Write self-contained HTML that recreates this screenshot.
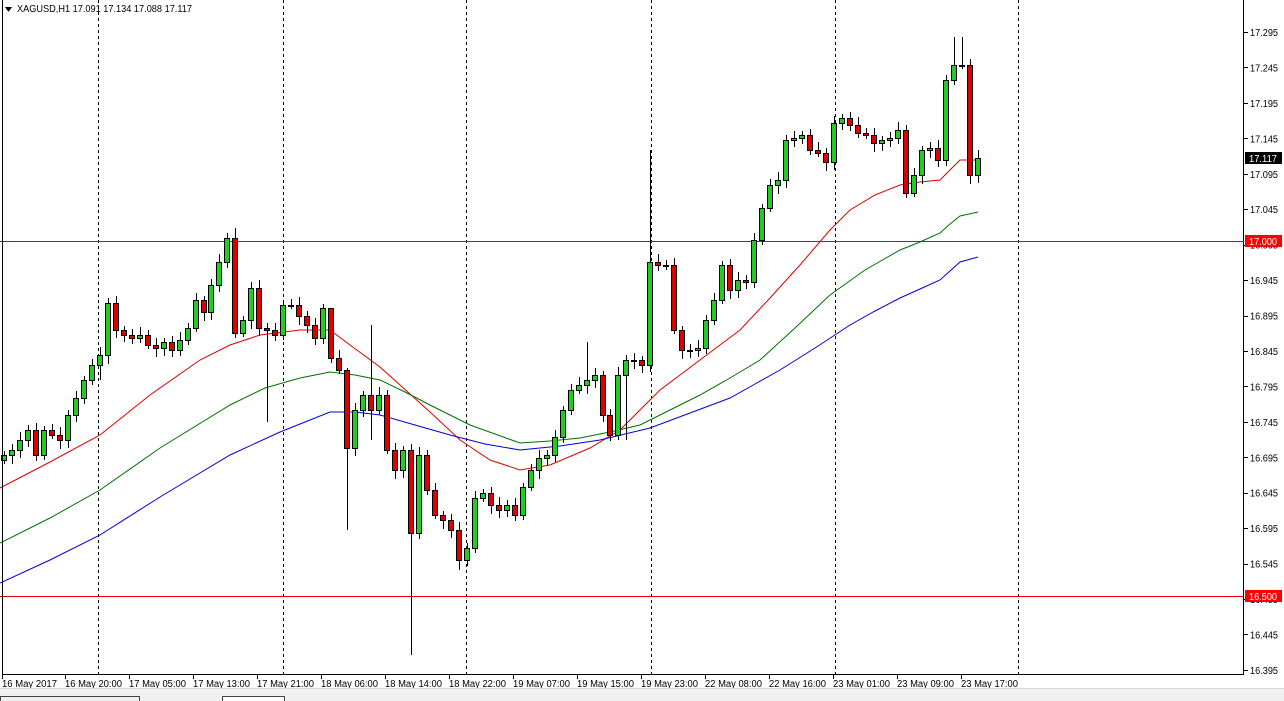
<!DOCTYPE html>
<html><head><meta charset="utf-8"><style>
html,body{margin:0;padding:0;background:#fff;width:1284px;height:701px;overflow:hidden;font-family:"Liberation Sans","DejaVu Sans",sans-serif}
svg text{font-family:"Liberation Sans","DejaVu Sans",sans-serif;font-size:10px}
</style></head><body>
<svg id="s" width="1284" height="701" xmlns="http://www.w3.org/2000/svg" shape-rendering="crispEdges">
<rect width="1284" height="701" fill="#fff"/>
<g id="grid"></g>
<line x1="0" y1="241.5" x2="1244" y2="241.5" stroke="#e00000"/>
<line x1="0" y1="596.5" x2="1244" y2="596.5" stroke="#e00000"/>
<g id="ma" shape-rendering="auto"></g>
<g id="c"></g>
<rect x="2.5" y="-1" width="1241" height="675.5" fill="none" stroke="#000"/>
<g id="ax"></g>
<polygon points="5,7 12,7 8.5,12" fill="#000"/>
<text x="17" y="12" fill="#000" textLength="175" lengthAdjust="spacingAndGlyphs">XAGUSD,H1  17.091 17.134 17.088 17.117</text>
<rect x="0" y="688" width="1284" height="13" fill="#f0f0f0"/>
<line x1="0" y1="688.5" x2="1284" y2="688.5" stroke="#d8d8d8"/>
<rect x="0.5" y="696.5" width="139" height="6" fill="#f0f0f0" stroke="#444"/>
<rect x="222.5" y="696.5" width="62" height="6" fill="#fff" stroke="#444"/>
</svg>
<script>
const NS="http://www.w3.org/2000/svg";
function el(p,t,a,txt){const e=document.createElementNS(NS,t);for(const k in a)e.setAttribute(k,a[k]);if(txt)e.textContent=txt;p.appendChild(e);return e;}
const g=document.getElementById('grid');
[98,283,466,651,835,1018].forEach(x=>el(g,'line',{x1:x+.5,y1:0,x2:x+.5,y2:674,stroke:'#000','stroke-dasharray':'3,3'}));
const ax=document.getElementById('ax');
for(let i=0;i<=18;i++){const y=32+i*35.44;const p=(17.295-i*0.05).toFixed(3);
el(ax,'line',{x1:1244,y1:Math.round(y)+.5,x2:1248,y2:Math.round(y)+.5,stroke:'#000'});
el(ax,'text',{x:1250,y:y+4,fill:'#000',textLength:28,lengthAdjust:'spacingAndGlyphs'},p);}
el(ax,'rect',{x:1245,y:152,width:37,height:12,fill:'#000'});el(ax,'text',{x:1249,y:162,fill:'#fff',textLength:28,lengthAdjust:'spacingAndGlyphs'},'17.117');
el(ax,'rect',{x:1245,y:235,width:37,height:12,fill:'#f00'});el(ax,'text',{x:1249,y:245,fill:'#fff',textLength:28,lengthAdjust:'spacingAndGlyphs'},'17.000');
el(ax,'rect',{x:1245,y:590,width:37,height:12,fill:'#f00'});el(ax,'text',{x:1249,y:600,fill:'#fff',textLength:28,lengthAdjust:'spacingAndGlyphs'},'16.500');
const tl=[[2,'16 May 2017'],[65,'16 May 20:00'],[129,'17 May 05:00'],[193,'17 May 13:00'],[257,'17 May 21:00'],[321,'18 May 06:00'],[385,'18 May 14:00'],[449,'18 May 22:00'],[513,'19 May 07:00'],[577,'19 May 15:00'],[641,'19 May 23:00'],[705,'22 May 08:00'],[769,'22 May 16:00'],[833,'23 May 01:00'],[897,'23 May 09:00'],[961,'23 May 17:00']];
tl.forEach(([x,t],i)=>{el(ax,'line',{x1:x+.5,y1:674,x2:x+.5,y2:679,stroke:'#000'});el(ax,'text',{x:x,y:687,fill:'#000',textLength:i==0?55:57,lengthAdjust:'spacingAndGlyphs'},t);});
const ma=document.getElementById('ma');
function line(pts,col){el(ma,'polyline',{points:pts.map(p=>p.join(',')).join(' '),fill:'none',stroke:col,'stroke-width':1});}
line([[0,488],[50,462],[100,435],[150,395],[200,360],[230,345],[260,335],[300,330],[330,330],[350,345],[380,367],[400,385],[430,412],[460,440],[490,460],[520,470],[550,465],[590,448],[620,430],[640,410],[660,390],[700,360],[740,330],[770,298],[800,265],[830,230],[850,210],[875,195],[900,185],[920,182],[940,180],[950,170],[960,160],[978,160]],'#e00000');
line([[0,543],[50,518],[100,490],[160,448],[230,405],[265,388],[300,378],[330,372],[355,375],[380,380],[405,392],[430,405],[470,425],[520,443],[550,441],[580,438],[610,432],[640,425],[670,410],[700,395],[730,378],[760,360],[795,328],[830,295],[865,270],[900,250],[920,242],[940,233],[950,224],[960,216],[978,212]],'#007000');
line([[0,583],[50,560],[100,535],[160,497],[230,455],[280,432],[330,412],[355,412],[380,415],[415,425],[450,435],[485,444],[520,450],[560,446],[600,440],[625,434],[650,428],[690,413],[730,398],[755,384],[780,370],[815,348],[850,325],[875,311],[900,298],[920,289],[940,280],[950,271],[960,262],[978,257]],'#0000e0');
const cl=[455,450,440,430,455,430,435,440,415,398,380,365,355,303,330,335,338,335,345,348,342,350,340,328,300,312,285,262,238,333,320,288,328,330,335,305,305,316,325,338,308,358,370,448,410,395,410,395,450,470,450,533,455,490,515,520,530,560,548,498,493,505,510,505,515,487,470,458,455,437,410,390,385,380,375,415,435,375,360,360,365,262,265,265,330,350,350,348,320,300,265,290,280,282,240,208,185,180,140,138,135,150,153,162,123,118,125,133,135,143,140,138,130,193,175,150,148,160,80,65,65,175,158];
const hi={29:228,41:325,43:368,46:325,73:342,81:150,119:37,120:37};const lo={43:530,46:440,51:655,33:422,78:440,57:570,12:380};
const c=document.getElementById('c');let o=460;
cl.forEach((v,i)=>{const x=4+i*7.98;const xc=Math.round(x)+.5;const top=Math.min(o,v),bot=Math.max(o,v);
let h=hi[i]!==undefined?hi[i]:top-4-(i*7%5);let l=lo[i]!==undefined?lo[i]:bot+4+(i*5%6);
el(c,'line',{x1:xc,y1:h,x2:xc,y2:l,stroke:'#000'});
el(c,'rect',{x:Math.round(x)-2.5,y:top+.5,width:5,height:Math.max(1,bot-top),fill:v<o?'#22cc22':'#dd0000',stroke:'#000'});
o=v;});
</script>
</body></html>
